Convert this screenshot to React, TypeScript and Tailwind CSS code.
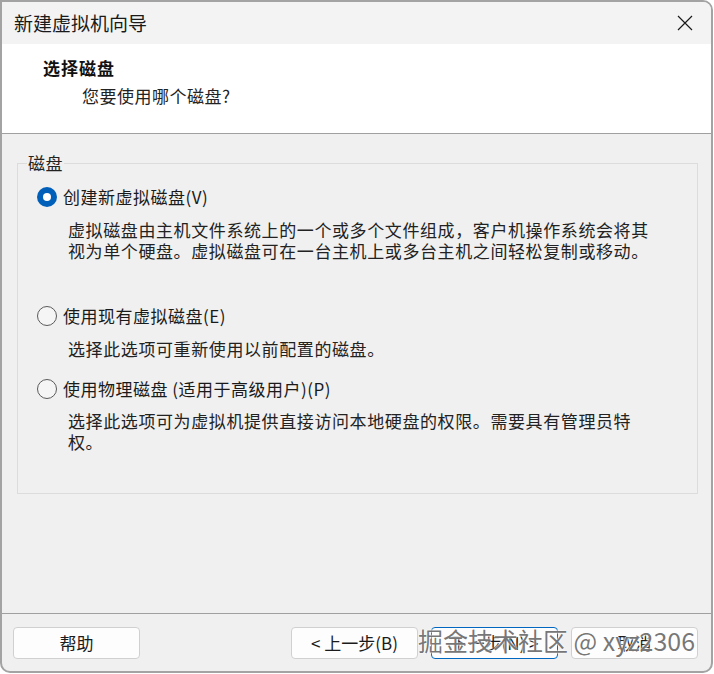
import React, { useState } from 'react';

const FONT = '"Noto Sans CJK SC", "Microsoft YaHei", sans-serif';

interface DiskOption {
  id: string;
  label: string;
  lines: string[];
}

const options: DiskOption[] = [
  {
    id: 'new',
    label: '创建新虚拟磁盘(V)',
    lines: [
      '虚拟磁盘由主机文件系统上的一个或多个文件组成，客户机操作系统会将其',
      '视为单个硬盘。虚拟磁盘可在一台主机上或多台主机之间轻松复制或移动。',
    ],
  },
  {
    id: 'existing',
    label: '使用现有虚拟磁盘(E)',
    lines: ['选择此选项可重新使用以前配置的磁盘。'],
  },
  {
    id: 'physical',
    label: '使用物理磁盘 (适用于高级用户)(P)',
    lines: ['选择此选项可为虚拟机提供直接访问本地硬盘的权限。需要具有管理员特', '权。'],
  },
];

// top margins per option row, tuned to the dialog spacing
const rowMargin = ['mt-[12px]', 'mt-[44px]', 'mt-[19px]'];
const descMargin = ['mt-[11px]', 'mt-[11px]', 'mt-[10px]'];

const Radio: React.FC<{ checked: boolean }> = ({ checked }) =>
  checked ? (
    <span className="w-[20px] h-[20px] rounded-full bg-[#005fb8] flex items-center justify-center shrink-0">
      <span className="w-[8px] h-[8px] rounded-full bg-white" />
    </span>
  ) : (
    <span className="w-[20px] h-[20px] rounded-full border border-[#5a5a5a] bg-[#f5f5f5] shrink-0" />
  );

const DialogButton: React.FC<{ label: string; focused?: boolean }> = ({ label, focused }) => (
  <button
    className={`w-[127px] h-[32px] rounded-[4px] bg-[#fdfdfd] text-[17px] text-[#1b1b1b] flex items-center justify-center ${
      focused ? 'border border-[#0067c0]' : 'border border-[#d0d0d0]'
    }`}
  >
    {label}
  </button>
);

export default function App() {
  const [selected, setSelected] = useState('new');

  return (
    <div className="w-[714px] h-[674px] bg-white" style={{ fontFamily: FONT }}>
      <div className="relative w-[713px] h-[673px] border-2 border-[#a3a3a3] rounded-tr-[10px] rounded-b-[10px] overflow-hidden flex flex-col bg-[#f0f0f0]">
        {/* title bar */}
        <div className="h-[42px] bg-[#f3f3f3] flex items-center justify-between pl-[12px] pr-[16px] shrink-0">
          <span className="text-[19px] text-[#1a1a1a]">新建虚拟机向导</span>
          <svg width="18" height="18" viewBox="0 0 18 18" className="mr-[1px]">
            <path d="M2 2 L16 16 M16 2 L2 16" stroke="#1a1a1a" strokeWidth="1.2" fill="none" />
          </svg>
        </div>

        {/* header */}
        <div className="h-[90px] bg-white border-b border-[#a0a0a0] shrink-0 pt-[12px]">
          <div className="pl-[41px] text-[17px] font-bold text-[#111] leading-[24px] tracking-[1px]">选择磁盘</div>
          <div className="pl-[80px] mt-[4px] text-[17px] text-[#222] leading-[24px] tracking-[0.5px]">您要使用哪个磁盘?</div>
        </div>

        {/* body */}
        <div className="flex-1 pt-[18px] px-[15px]">
          <fieldset className="border border-[#dcdcdc] pb-[41px] w-[681px]">
            <legend className="ml-[9px] px-[1px] text-[17px] leading-[22px] text-[#222] tracking-[0.5px]">磁盘</legend>
            {options.map((opt, i) => (
              <div key={opt.id}>
                <div
                  className={`${rowMargin[i]} ml-[19px] flex items-center gap-[6px] h-[22px] cursor-default`}
                  onClick={() => setSelected(opt.id)}
                >
                  <Radio checked={selected === opt.id} />
                  <span className="text-[17px] leading-[22px] text-[#1a1a1a] tracking-[0.5px]">{opt.label}</span>
                </div>
                <div className={`${descMargin[i]} ml-[50px] text-[17px] leading-[21px] text-[#222] tracking-[0.6px]`}>
                  {opt.lines.map((l, j) => (
                    <div key={j} className="h-[21px]">{l}</div>
                  ))}
                </div>
              </div>
            ))}
          </fieldset>
        </div>

        {/* footer */}
        <div className="h-[58px] border-t border-[#a0a0a0] shrink-0 flex items-start pt-[13px] pl-[11px]">
          <DialogButton label="帮助" />
          <div className="ml-[151px] flex gap-[13px]">
            <DialogButton label="< 上一步(B)" />
            <DialogButton label="下一步(N) >" focused />
            <DialogButton label="取消" />
          </div>
        </div>

        {/* watermark */}
        <div
          className="absolute left-[416px] top-[622px] text-[25px] leading-[32px] text-[#5e5e5e]/85 whitespace-nowrap pointer-events-none"
          style={{ textShadow: '0 0 2px #fff, 0 0 2px #fff' }}
        >
          掘金技术社区 @ xyz2306
        </div>
      </div>
    </div>
  );
}
